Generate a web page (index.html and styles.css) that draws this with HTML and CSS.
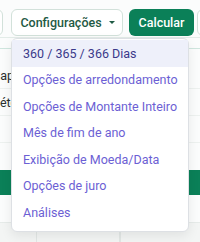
FILE: index.html
```html
<!DOCTYPE html>
<html lang="pt">
<head>
  <meta charset="UTF-8">
  <meta name="viewport" content="width=device-width, initial-scale=1.0">
  <title>Calculadora</title>
  <link rel="stylesheet" href="styles.css">
</head>
<body>
  <div class="page">
    <div class="toolbar">
      <button class="btn btn-outline btn-cut"></button>
      <button class="btn btn-outline btn-config">Configurações <span class="caret"></span></button>
      <button class="btn btn-primary">Calcular</button>
      <button class="btn btn-outline btn-next"></button>
    </div>

    <div class="form">
      <div class="form-head"></div>
      <div class="form-row"><span class="label label-capital">Capital inicial</span></div>
      <div class="form-row"><span class="label label-metodo">Método</span></div>
      <div class="form-row"></div>
    </div>

    <div class="table">
      <div class="table-head"></div>
      <div class="table-row"></div>
      <div class="table-row table-row-alt">
        <div class="cell cell-a"></div>
        <div class="cell cell-b"></div>
        <div class="cell"></div>
      </div>
    </div>

    <!-- settings dropdown -->
    <div class="dropdown">
      <a class="dropdown-item active">360 / 365 / 366 Dias</a>
      <a class="dropdown-item">Opções de arredondamento</a>
      <a class="dropdown-item">Opções de Montante Inteiro</a>
      <a class="dropdown-item">Mês de fim de ano</a>
      <a class="dropdown-item">Exibição de Moeda/Data</a>
      <a class="dropdown-item">Opções de juro</a>
      <a class="dropdown-item">Análises</a>
    </div>
  </div>
</body>
</html>
```

FILE: styles.css
```css
* {
  margin: 0;
  padding: 0;
  box-sizing: border-box;
}

body {
  font-family: 'Roboto', 'Noto Sans', sans-serif;
  background-color: #fbfcfc;
  width: 200px;
  height: 242px;
  overflow: hidden;
}

.page {
  position: relative;
  height: 242px;
  overflow: hidden;
}

.toolbar {
  display: flex;
  align-items: center;
  padding-top: 7px;
  height: 38px;
  border-bottom: 1px solid #e3ece8;
}

.btn {
  height: 27px;
  border-radius: 6px;
  font-family: inherit;
  font-size: 12.5px;
  display: flex;
  align-items: center;
  justify-content: center;
  flex-shrink: 0;
}

.btn-outline {
  background-color: #fff;
  border: 1px solid #d2e1da;
  color: #1f5a44;
}

.btn-cut {
  width: 12px;
  margin-left: -9px;
}

.btn-config {
  width: 112px;
  margin-left: 8px;
  gap: 7px;
  padding-left: 1px;
  font-weight: 500;
}

.caret {
  width: 0;
  height: 0;
  border-left: 3px solid transparent;
  border-right: 3px solid transparent;
  border-top: 3.5px solid #1f5a44;
}

.btn-primary {
  width: 65px;
  margin-left: 6px;
  background-color: #0b8058;
  border: none;
  color: #fff;
  font-weight: 500;
}

.btn-next {
  width: 40px;
  margin-left: 3px;
}

.form {
  display: flex;
  flex-direction: column;
}

.form-head {
  height: 11px;
  border-bottom: 1px solid #cfe6de;
}

.form-row {
  height: 27px;
  display: flex;
  align-items: center;
  font-size: 12.5px;
  color: #2a2f2d;
  border-bottom: 1px solid #edf1ef;
  white-space: nowrap;
}

.form-row:nth-child(2) {
  margin-top: 13px;
}

.label-capital {
  margin-left: -8px;
}

.label-metodo {
  margin-left: -11px;
}

.table {
  margin-top: 27px;
}

.table-head {
  height: 25px;
  background-color: #0b8058;
}

.table-row {
  height: 28px;
  border-bottom: 1px solid #e6ebe9;
}

.table-row-alt {
  display: flex;
  height: 30px;
  background-color: #f3f5f4;
}

.cell {
  border-right: 1px solid #e2e7e5;
}

.cell-a {
  width: 37px;
}

.cell-b {
  width: 83px;
}

/* Dropdown */
.dropdown {
  position: absolute;
  top: 38px;
  left: 11px;
  width: 178px;
  height: 194px;
  padding-top: 1px;
  background-color: #fff;
  border: 1px solid #dde0e4;
  border-radius: 6px;
  box-shadow: 0 4px 12px rgba(0, 0, 0, 0.08);
}

.dropdown-item {
  display: flex;
  align-items: center;
  height: 26.5px;
  padding-left: 11px;
  font-size: 12.5px;
  color: #6c5fd4;
  white-space: nowrap;
}

.dropdown-item.active {
  background-color: #eef0fa;
  color: #3b3a8a;
}
```
